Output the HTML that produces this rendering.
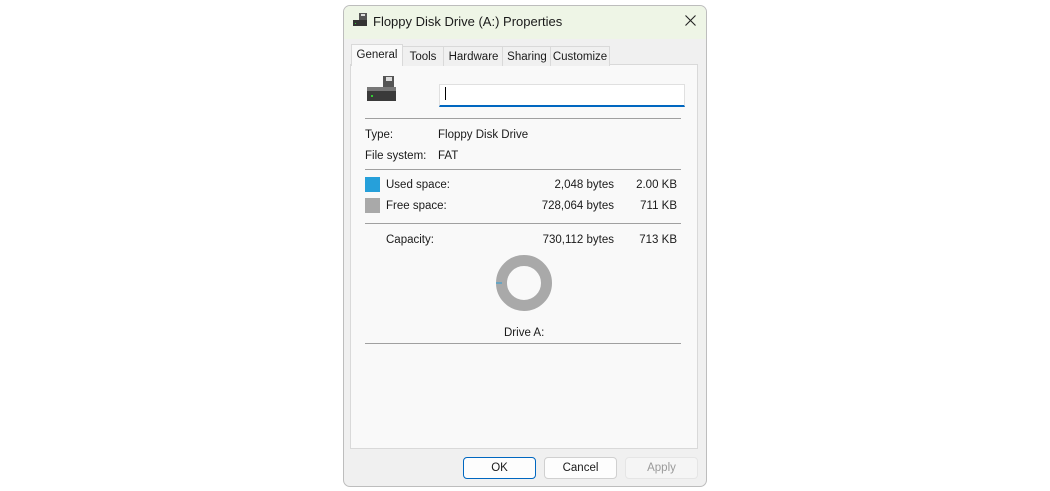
<!DOCTYPE html>
<html><head><style>
body{margin:0;width:1050px;height:491px;background:#fff;font-family:"Liberation Sans",sans-serif;font-size:11.5px;color:#1a1a1a;position:relative;overflow:hidden}
.a{position:absolute}
.win{left:343px;top:5px;width:362px;height:480px;border:1px solid #bdbdbd;border-radius:7px;background:#f0f0f0;overflow:hidden}
.title{left:0;top:0;width:362px;height:33px;background:#eef5e6}
.tab{top:40px;height:19px;border:1px solid #d9d9d9;border-bottom:none;background:#f0f0f0;line-height:20px;text-align:center}
.panel{left:6px;top:58px;width:346px;height:383px;border:1px solid #d9d9d9;background:#f9f9f9}
.hr{height:1px;background:#a0a0a0;width:316px;left:14px}
.btn{top:451px;height:20px;border:1px solid #d0d0d0;border-radius:4px;background:#fdfdfd;text-align:center;line-height:20px}
.t{margin-top:1px}
</style></head><body>
<div class="a win">
 <div class="a title"></div>
 <svg class="a" style="left:9px;top:7px" width="16" height="14"><rect x="6" y="0" width="8" height="7" fill="#555"/><rect x="8" y="1" width="4" height="2" fill="#ddd"/><rect x="0" y="7" width="14" height="6" fill="#333"/><rect x="2" y="10" width="1" height="1" fill="#3c3"/></svg>
 <div class="a" style="left:29px;top:8px;font-size:13px">Floppy Disk Drive (A:) Properties</div>
 <svg class="a" style="left:341px;top:9px" width="11" height="11"><path d="M0.5 0.5L10.5 10.5M10.5 0.5L0.5 10.5" stroke="#222" stroke-width="1.1"/></svg>
 <div class="a panel"></div>
 <div class="a tab" style="left:7px;top:38px;height:21px;width:50px;background:#f9f9f9;line-height:21px;z-index:2">General</div>
 <div class="a tab" style="left:57px;width:42px">Tools</div>
 <div class="a tab" style="left:99px;width:59px">Hardware</div>
 <div class="a tab" style="left:158px;width:48px">Sharing</div>
 <div class="a tab" style="left:206px;width:58px">Customize</div>
 <svg class="a" style="left:23px;top:70px" width="32" height="27"><rect x="16" y="0" width="11" height="11" fill="#555"/><rect x="19" y="1" width="6" height="4" fill="#ddd"/><rect x="0" y="11" width="29" height="14" fill="#3a3a3a"/><rect x="0" y="11" width="29" height="4" fill="#777"/><rect x="4" y="19" width="2" height="2" fill="#3c3"/></svg>
 <div class="a" style="left:95px;top:78px;width:244px;height:20px;background:#fff;border:1px solid #e0e0e0;border-bottom:2px solid #0067c0"></div>
 <div class="a" style="left:101px;top:81px;width:1px;height:13px;background:#000"></div>
 <div class="a hr" style="left:21px;top:112px"></div>
 <div class="a" style="left:21px;top:123px">Type:</div><div class="a" style="left:94px;top:123px">Floppy Disk Drive</div>
 <div class="a" style="left:21px;top:144px">File system:</div><div class="a" style="left:94px;top:144px">FAT</div>
 <div class="a hr" style="left:21px;top:163px"></div>
 <div class="a" style="left:21px;top:171px;width:15px;height:15px;background:#26a0da"></div>
 <div class="a" style="left:42px;top:173px">Used space:</div><div class="a" style="left:180px;top:173px;width:90px;text-align:right">2,048 bytes</div><div class="a" style="left:270px;top:173px;width:63px;text-align:right">2.00 KB</div>
 <div class="a" style="left:21px;top:192px;width:15px;height:15px;background:#a9a9a9"></div>
 <div class="a" style="left:42px;top:194px">Free space:</div><div class="a" style="left:180px;top:194px;width:90px;text-align:right">728,064 bytes</div><div class="a" style="left:270px;top:194px;width:63px;text-align:right">711 KB</div>
 <div class="a hr" style="left:21px;top:217px"></div>
 <div class="a" style="left:42px;top:228px">Capacity:</div><div class="a" style="left:180px;top:228px;width:90px;text-align:right">730,112 bytes</div><div class="a" style="left:270px;top:228px;width:63px;text-align:right">713 KB</div>
 <svg class="a" style="left:151px;top:248px" width="58" height="58"><circle cx="29" cy="29" r="22.5" fill="none" stroke="#a9a9a9" stroke-width="11"/><line x1="1" y1="29" x2="7" y2="29" stroke="#26a0da"/></svg>
 <div class="a" style="left:160px;top:321px">Drive A:</div>
 <div class="a hr" style="left:21px;top:337px"></div>
 <div class="a btn" style="left:119px;width:71px;border:1px solid #0067c0">OK</div>
 <div class="a btn" style="left:200px;width:71px">Cancel</div>
 <div class="a btn" style="left:281px;width:71px;color:#9a9a9a;background:#f5f5f5;border-color:#e5e5e5">Apply</div>
</div>
</body></html>
